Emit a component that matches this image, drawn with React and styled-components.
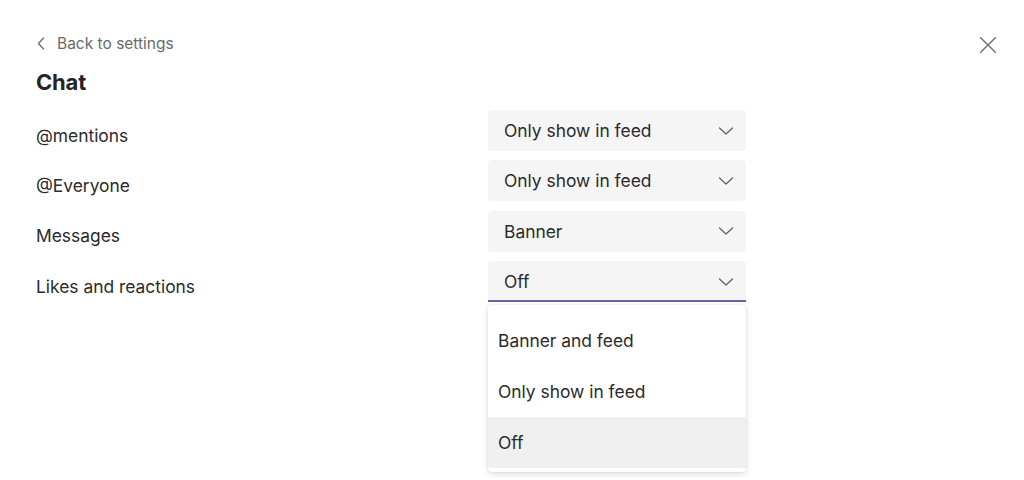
import React from "react";
import styled, { createGlobalStyle } from "styled-components";

const Global = createGlobalStyle`
  html, body { margin: 0; padding: 0; background: #ffffff; }
  body { font-family: Inter, "Noto Sans", sans-serif; color: #242424; }
  * { box-sizing: border-box; }
`;

const Page = styled.div`
  width: 1024px;
  height: 480px;
  overflow: hidden;
  position: relative;
  padding: 33px 36px 0 36px;
`;

const Close = styled.button`
  position: absolute;
  top: 37px;
  right: 28px;
  width: 16px;
  height: 16px;
  padding: 0;
  border: 0;
  background: none;
  display: flex;
  align-items: center;
  justify-content: center;
`;

const Back = styled.div`
  display: flex;
  align-items: center;
  gap: 12px;
  height: 20px;
  font-size: 15.5px;
  color: #6a6a6a;
  padding-left: 1px;
`;

const Title = styled.h1`
  margin: 14px 0 0 0;
  font-size: 22px;
  font-weight: 700;
  line-height: 30px;
  color: #242424;
  letter-spacing: -0.2px;
`;

const Rows = styled.div`
  margin-top: 13px;
  display: flex;
  flex-direction: column;
  gap: 9.4px;
`;

const Row = styled.div`
  display: flex;
  align-items: center;
  height: 41px;
  position: relative;
`;

const Label = styled.div`
  width: 452px;
  font-size: 17.4px;
  color: #2b2b2b;
  padding-top: 9px;
`;

const Select = styled.div`
  width: 258px;
  height: 41px;
  background: #f5f5f5;
  border-radius: 4px;
  display: flex;
  align-items: center;
  justify-content: space-between;
  padding: 0 12px 0 16px;
  font-size: 17.4px;
  color: #2b2b2b;
  ${(p) =>
    p.$open &&
    `
    border-radius: 4px 4px 0 0;
    border-bottom: 2px solid #6264a7;
    padding-top: 2px;
  `}
`;

const Menu = styled.div`
  position: absolute;
  left: 452px;
  top: 44px;
  width: 258px;
  background: #ffffff;
  border-radius: 4px;
  box-shadow: 0 2px 6px rgba(0, 0, 0, 0.14), 0 0 2px rgba(0, 0, 0, 0.1);
  padding: 10px 0 4px 0;
`;

const Item = styled.div`
  height: 51px;
  display: flex;
  align-items: center;
  padding-left: 10px;
  font-size: 17.4px;
  color: #2b2b2b;
  background: ${(p) => (p.$active ? "#f0f0f0" : "transparent")};
`;

const Chevron = () => (
  <svg width="16" height="16" viewBox="0 0 16 16" fill="none">
    <path d="M1.5 5 L8 11 L14.5 5" stroke="#5f5f5f" strokeWidth="1.2" strokeLinecap="round" strokeLinejoin="round" />
  </svg>
);

const rows = [
  { label: "@mentions", value: "Only show in feed" },
  { label: "@Everyone", value: "Only show in feed" },
  { label: "Messages", value: "Banner" },
  { label: "Likes and reactions", value: "Off", open: true },
];

export default function App() {
  return (
    <>
      <Global />
      <Page>
        <Close aria-label="Close">
          <svg width="16" height="16" viewBox="0 0 16 16">
            <path d="M0.7 0.7 L15.3 15.3 M15.3 0.7 L0.7 15.3" stroke="#6e6e6e" strokeWidth="1.4" strokeLinecap="round" />
          </svg>
        </Close>
        <Back>
          <svg width="8" height="13" viewBox="0 0 8 13">
            <path d="M6.5 1 L1.5 6.5 L6.5 12" stroke="#6a6a6a" strokeWidth="1.3" fill="none" strokeLinecap="round" strokeLinejoin="round" />
          </svg>
          <span>Back to settings</span>
        </Back>
        <Title>Chat</Title>
        <Rows>
          {rows.map((r) => (
            <Row key={r.label}>
              <Label>{r.label}</Label>
              <Select $open={r.open}>
                <span>{r.value}</span>
                <Chevron />
              </Select>
              {r.open && (
                <Menu>
                  <Item>Banner and feed</Item>
                  <Item>Only show in feed</Item>
                  <Item $active>Off</Item>
                </Menu>
              )}
            </Row>
          ))}
        </Rows>
      </Page>
    </>
  );
}
